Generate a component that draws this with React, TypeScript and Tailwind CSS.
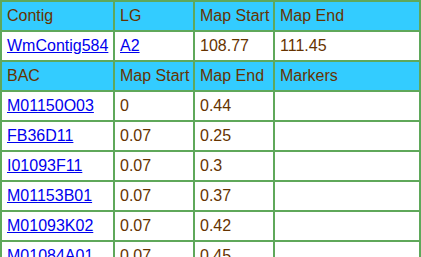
import React from "react";

const rows: [string, string, string][] = [
  ["M01150O03", "0", "0.44"],
  ["FB36D11", "0.07", "0.25"],
  ["I01093F11", "0.07", "0.3"],
  ["M01153B01", "0.07", "0.37"],
  ["M01093K02", "0.07", "0.42"],
  ["M01084A01", "0.07", "0.45"],
  ["M01084A02", "0.07", "0.48"],
];

const H = ({ children }: { children?: React.ReactNode }) => (
  <div className="bg-[#33ccff] h-[28px] flex items-center pl-[5px] text-[#663300]">{children}</div>
);
const C = ({ children }: { children?: React.ReactNode }) => (
  <div className="bg-white h-[28px] flex items-center pl-[5px] text-[#663300]">{children}</div>
);
const L = ({ children }: { children: React.ReactNode }) => (
  <div className="bg-white h-[28px] flex items-center pl-[5px]">
    <a href="#" className="text-[#0000ee] underline">{children}</a>
  </div>
);

export default function App() {
  return (
    <div className="w-[421px] bg-white" style={{ fontFamily: '"Liberation Sans", Arial, sans-serif' }}>
      <div className="grid grid-cols-[111px_78px_78px_144px] gap-[2px] p-[2px] bg-[#5fa85a] text-[16px] leading-none">
        <H>Contig</H>
        <H>LG</H>
        <H>Map Start</H>
        <H>Map End</H>
        <L>WmContig584</L>
        <L>A2</L>
        <C>108.77</C>
        <C>111.45</C>
        <H>BAC</H>
        <H>Map Start</H>
        <H>Map End</H>
        <H>Markers</H>
        {rows.map((r) => (
          <React.Fragment key={r[0]}>
            <L>{r[0]}</L>
            <C>{r[1]}</C>
            <C>{r[2]}</C>
            <C />
          </React.Fragment>
        ))}
      </div>
    </div>
  );
}
